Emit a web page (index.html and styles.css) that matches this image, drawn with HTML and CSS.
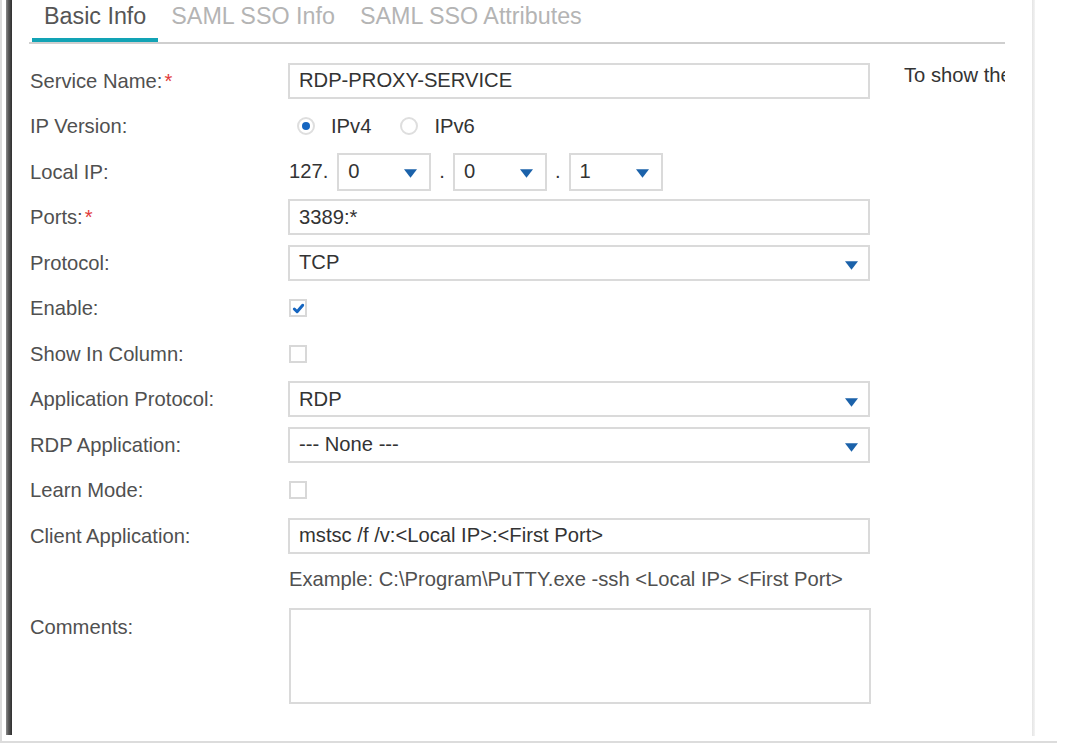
FILE: index.html
```html
<!DOCTYPE html>
<html lang="en">
<head>
<meta charset="utf-8">
<title>Service - Basic Info</title>
<link rel="stylesheet" href="styles.css">
</head>
<body>
<div class="screen">
  <div class="strip"></div>
  <div class="panel">
    <div class="tabs">
      <div class="tab active">Basic Info</div>
      <div class="tab">SAML SSO Info</div>
      <div class="tab">SAML SSO Attributes</div>
    </div>
    <div class="form">
      <div class="fields">
        <div class="row">
          <div class="label">Service Name:<span class="req">*</span></div>
          <div class="field"><input class="text" type="text" value="RDP-PROXY-SERVICE"></div>
        </div>
        <div class="row">
          <div class="label">IP Version:</div>
          <div class="field radios">
            <span class="radio checked"></span><span class="radio-label">IPv4</span>
            <span class="radio"></span><span class="radio-label">IPv6</span>
          </div>
        </div>
        <div class="row">
          <div class="label">Local IP:</div>
          <div class="field ip">
            <span class="ip-prefix">127.</span>
            <div class="select small"><span>0</span><svg class="arrow" viewBox="0 0 14 9"><path d="M0 0H14L7 9Z"/></svg></div>
            <span class="dot">.</span>
            <div class="select small"><span>0</span><svg class="arrow" viewBox="0 0 14 9"><path d="M0 0H14L7 9Z"/></svg></div>
            <span class="dot">.</span>
            <div class="select small"><span>1</span><svg class="arrow" viewBox="0 0 14 9"><path d="M0 0H14L7 9Z"/></svg></div>
          </div>
        </div>
        <div class="row">
          <div class="label">Ports:<span class="req">*</span></div>
          <div class="field"><input class="text" type="text" value="3389:*"></div>
        </div>
        <div class="row">
          <div class="label">Protocol:</div>
          <div class="field"><div class="select"><span>TCP</span><svg class="arrow" viewBox="0 0 14 9"><path d="M0 0H14L7 9Z"/></svg></div></div>
        </div>
        <div class="row">
          <div class="label">Enable:</div>
          <div class="field"><span class="checkbox"><svg viewBox="0 0 14 14"><path d="M2.5 7.5L5.5 10.5L11.5 3.5" /></svg></span></div>
        </div>
        <div class="row">
          <div class="label">Show In Column:</div>
          <div class="field"><span class="checkbox"></span></div>
        </div>
        <div class="row">
          <div class="label">Application Protocol:</div>
          <div class="field"><div class="select"><span>RDP</span><svg class="arrow" viewBox="0 0 14 9"><path d="M0 0H14L7 9Z"/></svg></div></div>
        </div>
        <div class="row">
          <div class="label">RDP Application:</div>
          <div class="field"><div class="select"><span>--- None ---</span><svg class="arrow" viewBox="0 0 14 9"><path d="M0 0H14L7 9Z"/></svg></div></div>
        </div>
        <div class="row">
          <div class="label">Learn Mode:</div>
          <div class="field"><span class="checkbox"></span></div>
        </div>
        <div class="row">
          <div class="label">Client Application:</div>
          <div class="field"><input class="text" type="text" value="mstsc /f /v:&lt;Local IP&gt;:&lt;First Port&gt;"></div>
        </div>
        <div class="note">Example: C:\Program\PuTTY.exe -ssh &lt;Local IP&gt; &lt;First Port&gt;</div>
        <div class="row top">
          <div class="label">Comments:</div>
          <div class="field"><textarea class="area"></textarea></div>
        </div>
      </div>
      <div class="help">To show the</div>
    </div>
  </div>
  <div class="gap"></div>
  <div class="divider"></div>
</div>
</body>
</html>
```

FILE: styles.css
```css
html, body {
  margin: 0;
  padding: 0;
  background: #ffffff;
}

body {
  font-family: "Liberation Sans", Arial, sans-serif;
  font-size: 20.2px;
  color: #505050;
}

.screen {
  display: flex;
  align-items: flex-start;
  width: 1055px;
  height: 741px;
  border-left: 2px solid #dcdcdc;
  border-bottom: 2px solid #dcdcdc;
  overflow: hidden;
}

.strip {
  flex: 0 0 6px;
  height: 735px;
  margin-left: 4px;
  background: linear-gradient(to right, #8a8a8a 0%, #5a5a5a 40%, #2e2e2e 100%);
}

.panel {
  flex: 0 0 993px;
  height: 735px;
  overflow: hidden;
}

.gap {
  flex: 0 0 27px;
}

.divider {
  flex: 0 0 3px;
  height: 736px;
  background: linear-gradient(to right, #e4e4e4, #f3f3f3);
}

/* Tabs */
.tabs {
  display: flex;
  margin-left: 17px;
  padding-left: 3px;
  height: 42px;
  border-bottom: 2px solid #cfcfcf;
}

.tab {
  font-size: 23.3px;
  line-height: 27px;
  padding: 3px 12px 12px;
  margin-right: 1px;
  color: #b4b4b4;
  white-space: nowrap;
}

.tab.active {
  color: #555555;
  border-bottom: 4px solid #12a3b5;
  padding-bottom: 8px;
}

/* Form */
.form {
  display: flex;
  align-items: flex-start;
  padding-top: 14px;
}

.fields {
  flex: 0 0 840px;
  padding-left: 18px;
}

.help {
  flex: 0 0 auto;
  margin-left: 25px;
  padding-top: 6px;
  line-height: 22px;
  color: #333333;
  white-space: nowrap;
}

.row {
  display: flex;
  align-items: center;
  height: 45.5px;
}

.row.top {
  align-items: flex-start;
  height: auto;
  margin-top: 18px;
}

.row.top .label {
  padding-top: 8px;
}

.label {
  flex: 0 0 258px;
  line-height: 22px;
  color: #505050;
  white-space: nowrap;
}

.req {
  color: #e23b3b;
  margin-left: 2px;
}

.field {
  flex: 0 0 582px;
  display: flex;
  align-items: center;
}

.text {
  box-sizing: border-box;
  width: 582px;
  height: 36px;
  margin: 0;
  padding: 0 9px;
  border: 2px solid #dadada;
  border-radius: 0;
  font-family: "Liberation Sans", Arial, sans-serif;
  font-size: 20.2px;
  color: #333333;
  background: #ffffff;
  outline: none;
}

.area {
  box-sizing: border-box;
  display: block;
  width: 582px;
  height: 96px;
  margin: 0 0 0 1px;
  border: 2px solid #dadada;
  border-radius: 0;
  resize: none;
  background: #ffffff;
}

.select {
  box-sizing: border-box;
  display: flex;
  align-items: center;
  justify-content: space-between;
  width: 582px;
  height: 36px;
  padding: 0 10px 0 9px;
  border: 2px solid #dadada;
  color: #333333;
  background: #ffffff;
}

.select.small {
  width: 94px;
  height: 38px;
  padding-right: 12px;
}

.arrow {
  width: 13px;
  height: 9px;
  margin-top: 6px;
  fill: #1b62aa;
}

.select.small .arrow {
  margin-top: 4px;
}

/* Local IP */
.ip {
  gap: 8px;
}

.ip-prefix {
  color: #333333;
  margin-left: 1px;
  margin-right: 1px;
}

.dot {
  color: #333333;
}

/* Radios */
.radios {
  padding-left: 9px;
}

.radio {
  box-sizing: border-box;
  display: inline-flex;
  align-items: center;
  justify-content: center;
  width: 18px;
  height: 18px;
  border: 2px solid #dedede;
  border-radius: 50%;
  background: #ffffff;
}

.radio.checked::after {
  content: "";
  width: 8px;
  height: 8px;
  border-radius: 50%;
  background: #1565c0;
}

.radio-label {
  color: #333333;
  margin-left: 16px;
  margin-right: 29px;
}

/* Checkbox */
.checkbox {
  box-sizing: border-box;
  display: inline-flex;
  align-items: center;
  justify-content: center;
  width: 18px;
  height: 18px;
  margin-left: 1px;
  border: 2px solid #d8d8d8;
  background: #ffffff;
}

.checkbox svg {
  width: 13px;
  height: 13px;
  fill: none;
  stroke: #1565c0;
  stroke-width: 3.2;
  stroke-linecap: round;
  stroke-linejoin: round;
}

.note {
  margin-left: 259px;
  margin-top: 9px;
  line-height: 22px;
  color: #505050;
  white-space: nowrap;
}
```
